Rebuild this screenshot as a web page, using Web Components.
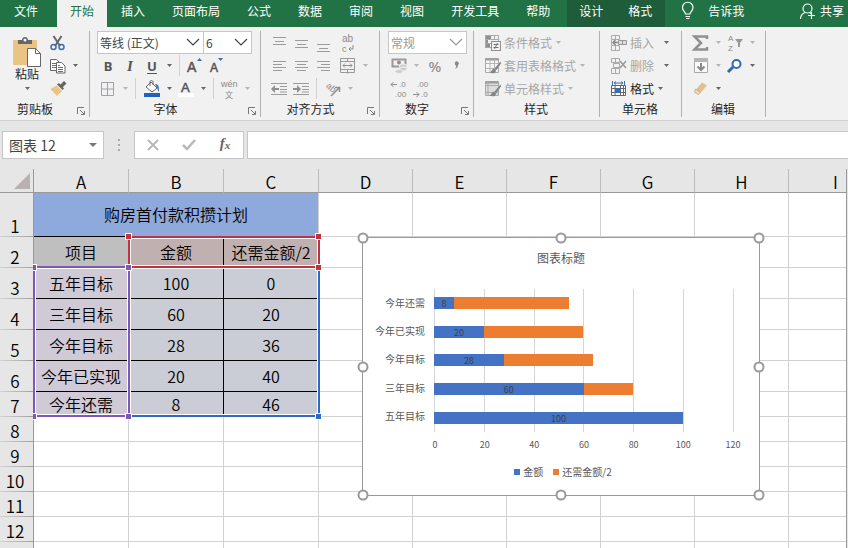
<!DOCTYPE html>
<html lang="zh-CN">
<head>
<meta charset="utf-8">
<title>购房首付款积攒计划</title>
<style>
html, body { margin: 0; height: 100%; overflow: hidden; }
body { font: 12px/16px "Noto Sans CJK SC", "Noto Sans", sans-serif; color: #262626; }
</style>
</head>
<body>
<excel-app></excel-app>
<script>
const svg = (w, h, body) => `<svg width="${w}" height="${h}" viewBox="0 0 ${w} ${h}" fill="none" stroke-width="1" aria-hidden="true">${body}</svg>`;
const T = (x, y, size, text, extra = '') => `<text x="${x}" y="${y}" font-size="${size}" stroke="none" fill="#8a8a8a" ${extra}>${text}</text>`;
const lines = (x1s, x2s, ys) => svg(16, 20, ys.map((y, i) => `<path stroke="#9c9c9c" d="M${x1s[i]} ${y}.5H${x2s[i]}"/>`).join(''));
const gridPart = '<path d="M.5 .5h13v14H.5z" fill="#f8f4f8" stroke="#aaa"/><path d="M.5 1.5h13" stroke="#999" stroke-width="2"/><path d="M.5 5.5h13M.5 10.5h13M5 1v14M9.500 1v14" stroke="#b5b5b5"/>';
const brushPart = '<path d="M15.500 3.500l-6 7 1.500 2 5-7z" fill="#858585"/><path d="M9 10.500c-2 0-2 3-4.500 4 3 1.500 6.500 1 6.500-2z" fill="#858585"/>';
const ICONS = {
  paste: svg(30, 31, '<rect x="1" y="4" width="24" height="25" rx="1" fill="#e9c485"/><path d="M6 8V4h4c0-4 6-4 6 0h4v4z" fill="#666"/><circle cx="13" cy="4" r="1.500" fill="#f1f1f1"/><path d="M15.500 12.500h8l5 5v13h-13z" fill="#fff" stroke="#666"/><path d="M23.500 12.500v5h5" stroke="#666"/>'),
  cut: svg(16, 16, '<path d="M3.500 1l6.500 10M11.500 1L5 11" stroke="#666" stroke-width="2"/><circle cx="3.500" cy="12" r="2.500" stroke="#3c6eb4" stroke-width="1.500"/><circle cx="11.500" cy="12" r="2.500" stroke="#3c6eb4" stroke-width="1.500"/>'),
  copy: svg(16, 16, '<path d="M.5 1.500h6l3 3v8h-9z" fill="#fff" stroke="#666"/><path d="M2 5.500h4M2 7.500h4M2 9.500h4" stroke="#3c78c8"/><path d="M6.500 4.500h5l3.500 3.500v7h-8.500z" fill="#fff" stroke="#666"/><path d="M8 9.500h5M8 11.500h5M8 7.500h2M8 13.500h5" stroke="#3c78c8"/>'),
  brush: svg(17, 15, '<path d="M10 4l4-4 2.500 2.500-4 4z" fill="#666"/><path d="M7 3.500l2-1.500 5 5.500-1.500 1.500z" fill="#666"/><path d="M6.500 4.500l5.500 5.500-5 5-6.500-7z" fill="#e9c485"/>'),
  grow: svg(18, 20, T(0, 16, 14, 'A', 'style="fill:#555;stroke:#555;stroke-width:.5"') + '<path d="M10 5l2.500-3L15 5z" fill="#3c6eb4"/>'),
  shrink: svg(18, 20, T(1, 16, 12, 'A', 'style="fill:#555;stroke:#555;stroke-width:.5"') + '<path d="M9 2h5l-2.500 3z" fill="#3c6eb4"/>'),
  border: svg(14, 14, '<path d="M.5 .5h12v13H.5zM6.500 .5v13M.5 7h12" stroke="#a5a0a8"/>'),
  fill: svg(18, 18, '<path d="M3 7l5-5 6 6-5 4z" fill="#fff" stroke="#666"/><path d="M7 6V2c0-2 3-2 3 0v3" stroke="#666"/><path d="M12 4c4 0 4 3 4 8-2-2-1-4-3-6z" fill="#3c6eb4"/><rect x="1" y="13" width="16" height="4" fill="#1f63be"/>'),
  color: svg(18, 18, '<rect x="1" y="13" width="16" height="4" fill="#fff"/>' + T(4, 12, 13, 'A', 'style="fill:#555;stroke:#555;stroke-width:.5"')),
  pinyin: svg(20, 22, T(1, 9, 9, 'wén') + T(5, 20, 8, '文', 'class="cjk"')),
  top: lines([2,4,2], [15,13,15], [4,8,11]), mid: lines([2,4,2], [15,13,15], [7,11,14]), bot: lines([2,4,2], [15,13,15], [11,15,18]),
  left: lines([2,2,2,2], [15,11,15,11], [5,8,11,14]), center: lines([2,4,2,4], [15,13,15,13], [5,8,11,14]), right: lines([2,6,2,6], [15,15,15,15], [5,8,11,14]),
  outdent: svg(16, 14, '<path d="M0 1.500h16M9 4.500h7M9 7.500h7M0 12.500h16M9 10h7" stroke="#9c9c9c"/><path d="M0 7l4-4v3h4v2H4v3z" fill="#8f8f8f"/>'),
  indent: svg(16, 14, '<path d="M0 1.500h16M9 4.500h7M9 7.500h7M0 12.500h16M9 10h7" stroke="#9c9c9c"/><path d="M8 7L4 3v3H0v2h4v3z" fill="#8f8f8f"/>'),
  wrap: svg(16, 22, T(2, 10, 10, 'ab') + T(2, 20, 9, 'c') + '<path d="M13 13v4H9M11 15l-2 2 2 2" stroke="#8f8f8f"/>'),
  merge: svg(16, 16, '<path d="M.5 .5h14v14H.5zM.5 3.500h14M.5 11.500h14M7.500 .5v3M7.500 11.500v4" stroke="#999"/><path d="M3 7.500h9M5 5.500l-2 2 2 2M10 5.500l2 2-2 2" stroke="#8f8f8f"/>'),
  orient: svg(18, 18, '<g transform="rotate(42 6 9)">' + T(1, 10, 9, 'ab') + '</g><path d="M7 16l8-8M11 7.500h4.500V12" stroke="#8f8f8f" stroke-width="1.500"/>'),
  money: svg(17, 17, '<path d="M1.500 2.500h13v7h-13z" stroke="#999" stroke-width="2"/><circle cx="8" cy="5.500" r="2" fill="#8f8f8f"/><g fill="#ccc" stroke="#f1f1f1"><ellipse cx="12" cy="9" rx="4" ry="2"/><ellipse cx="12" cy="12" rx="4" ry="2"/><ellipse cx="8" cy="14.500" rx="4" ry="2"/></g>'),
  comma: svg(8, 12, '<path d="M2 2.500a2 2 0 1 1 3 2.500c0 2-1 3-3 4 1-1.500 1.500-2.500 1-3.500-1-.5-1.500-1.500-1-3z" fill="#8a8a8a"/>'),
  incdec: svg(16, 20, T(8, 8, 8, '.0') + T(4, 18, 8, '.00') + '<path d="M0 5.500h6M2.500 3L0 5.500 2.500 8" stroke="#8f8f8f"/>'),
  decdec: svg(16, 20, T(4, 8, 8, '.00') + T(8, 18, 8, '.0') + '<path d="M0 15.500h6M3.500 13L6 15.500 3.500 18" stroke="#8f8f8f"/>'),
  cond: svg(16, 16, '<path d="M0 0h6v4H0zM0 5h3v3H0zM0 9h5v4H0z" fill="#8f8f8f"/><path d="M.5 .5h13v12H.5zM.5 4.500h13M.5 8.500h13M9.500 .5v4" stroke="#aaa"/><rect x="6.500" y="6.500" width="9" height="9" fill="#f1f1f1" stroke="#8f8f8f"/><path d="M8.500 9.500h5M8.500 12.500h5M12.500 8l-3 6" stroke="#777"/>'),
  tstyle: svg(17, 16, gridPart + brushPart),
  cstyle: svg(17, 16, '<path d="M.5 .5h13v14H.5z" fill="#ddd" stroke="#aaa"/><path d="M.5 1.500h13" stroke="#999" stroke-width="2"/><path d="M.5 4.500h13M.5 11.500h13M3 1v14" stroke="#aaa"/>' + brushPart),
  insert: svg(16, 16, '<path d="M.5 .5h8v4h-8zM4.500 .5v4M.5 10.500h8v5h-8zM4.500 10.500v5M.5 5v5" stroke="#aaa"/><path d="M7.500 5.500h8v4h-8zM11.500 5.500v4" fill="#ddd" stroke="#999"/><path d="M7 7.500H2M4.500 5L2 7.500 4.500 10" stroke="#888" stroke-width="1.500"/>'),
  remove: svg(16, 16, '<path d="M.5 .5h8v4h-8zM4.500 .5v4M.5 10.500h8v5h-8zM4.500 10.500v5M2.500 5.500h6v4h-6z" stroke="#aaa"/><path d="M9 3l6 7M15 3l-6 7" stroke="#999" stroke-width="1.500"/>'),
  format: svg(16, 16, '<path d="M1.500 0v4M13.500 0v4M3 2h9M5 .5L3 2l2 1.500M10 .5L12 2l-2 1.500" stroke="#3c6eb4"/><path d="M.5 4.500h14v10H.5zM.5 7.500h14M.5 11.500h14M4 4.500v10M9.500 4.500v10M12.500 4.500v10" fill="#fff" stroke="#666"/><path d="M4 7h5v5H4z" fill="#2f6dc8"/>'),
  sum: svg(16, 16, '<path d="M14 4V1.500H1.500L8 8l-6.500 6.500H14V12" stroke="#909090" stroke-width="2.500"/>'),
  down: svg(14, 15, '<path d="M.5 .5h13v14H.5z" fill="#fafafa" stroke="#aaa"/><path d="M0 2h14" stroke="#b5b5b5" stroke-width="4"/><path d="M7 5v7M3.500 8.500L7 12l3.500-3.500" stroke="#888" stroke-width="2"/>'),
  clear: svg(14, 13, '<path d="M8 .5L13 3.500 6 11.500 1.500 8z" fill="#e0c091"/><path d="M1.500 7L6 10.500 4.500 12.500.5 10z" fill="#f0dcc0" stroke="#d0b080"/>'),
  sort: svg(17, 20, T(1, 8, 8, 'A') + T(1, 18, 8, 'Z') + '<path d="M8 6h8l-3 4v4h-2v-4z" fill="#999"/>'),
  find: svg(16, 14, '<circle cx="9.500" cy="5" r="4" fill="#fff" stroke="#3068b8" stroke-width="2"/><path d="M6 8l-5 5" stroke="#3068b8" stroke-width="3"/>'),
  chevron: svg(14, 9, '<path d="M1 1l6 6 6-6" stroke="currentColor" stroke-width="1.200"/>'),
  arrow: svg(5, 3, '<path d="M0 0h5L2.500 3z" fill="currentColor"/>'),
  launch: svg(8, 8, '<path d="M.5 7V.5H7M4 7.500h3.500V4M3 3l4 4" stroke="currentColor"/>'),
  bulb: svg(14, 18, '<path d="M4.500 12c0-2-3-3-3-6.500a5 5 0 0 1 10.500 0c0 3.500-3 4.500-3 6.500zM4.500 14.500h4.500M5 16.500h3.500" stroke="#fff" stroke-width="1.200"/>'),
  person: svg(16, 17, '<circle cx="7.500" cy="5.500" r="4.500" stroke="#fff" stroke-width="1.200"/><path d="M.5 16c0-4 2-5.500 4.500-6.500M9.500 9.500l1.500 1M8 12.500h7M11.500 9v7" stroke="#fff" stroke-width="1.200"/>'),
  cross: svg(12, 12, '<path d="M1 1l10 10M11 1L1 11" stroke="#b8b8b8" stroke-width="2"/>'),
  check: svg(14, 12, '<path d="M1 6l4 4 8-9" stroke="#b8b8b8" stroke-width="2.500"/>'),
};
const RESET = `*{box-sizing:border-box} button,input,select{font:inherit;color:inherit;border:0;background:none;padding:0;margin:0;border-radius:0;outline:0} svg{display:block;flex:none;overflow:visible} svg text{font-family:"Liberation Sans",sans-serif;font-weight:400} svg text.cjk{font-family:"Noto Sans CJK SC",sans-serif}`;
class Part extends HTMLElement {
  connectedCallback() {
    if (this.shadowRoot) return;
    this.attachShadow({ mode: 'open' }).innerHTML = `<style>${RESET}${this.css()}</style>${this.html()}`;
  }
  attr(name) { return this.getAttribute(name) || ''; }
}

customElements.define('app-tabs', class extends Part {
  css() { return `:host{display:flex;background:#217346;color:#fff;height:27px;overflow:hidden}
    nav{display:flex;gap:1px} button{height:27px;padding:0 13px 5px;white-space:nowrap}
    .file{padding-left:14px;padding-right:18px} .on{background:#f1f1f1;color:#217346}
    .ctx{display:flex;background:#1e5c3a;margin-left:3px} .ctx button{padding-left:12px}
    .tell,.share{display:flex;align-items:center;gap:13px} .tell{padding-left:16px}
    .share{gap:4px;margin-left:auto;padding-right:4px}`; }
  html() { const b = (t, c = '') => `<button class="${c}">${t}</button>`;
    return `<nav>${b('文件', 'file')}${b('开始', 'on')}${['插入','页面布局','公式','数据','审阅','视图','开发工具','帮助'].map(t => b(t)).join('')}
    <span class="ctx">${b('设计')}${b('格式')}</span></nav>
    <button class="tell">${ICONS.bulb}告诉我</button><button class="share">${ICONS.person}共享</button>`; }
});

customElements.define('ribbon-group', class extends Part {
  css() { return `:host{display:flex;flex-direction:column;flex:none;padding:0 1px 0 7px;border-right:1px solid #b1b1b1;height:86px;color:#262626}
    .body{height:69px} footer{display:flex;align-items:center;margin-left:-7px;height:20px}
    footer span{flex:1;text-align:center} button{width:18px;height:16px;display:flex;align-items:center;justify-content:flex-start;padding:5px 0 0 7px;color:#777}`; }
  html() { return `<div class="body"><slot></slot></div><footer><span>${this.attr('name')}</span>${this.hasAttribute('launcher') ? `<button aria-label="${this.attr('name')}设置">${ICONS.launch}</button>` : ''}</footer>`; }
});

customElements.define('ribbon-row', class extends Part {
  css() { return `:host{display:flex;align-items:center;height:23px}`; }
  html() { return '<slot></slot>'; }
});

customElements.define('ribbon-sep', class extends Part {
  css() { return `:host{display:block;width:1px;height:21px;background:#d0d0d0;margin:0 5px 0 4px}`; }
  html() { return ''; }
});

customElements.define('ribbon-button', class extends Part {
  css() { return `:host{display:flex;flex:none;color:#262626} :host([off]){color:#a6a6a6}
    button{display:flex;align-items:center;justify-content:center;height:23px;white-space:nowrap}
    .icon{width:22px;display:flex;justify-content:center} .glyph{font:700 13px/20px "Noto Sans","Noto Sans CJK SC",sans-serif;color:#555}
    :host([off]) .glyph{color:#8f8f8f;font-weight:500;font-size:15px}
    .wide .icon{width:16px;margin-right:3px}
    .arrow{width:12px;display:flex;justify-content:center;color:#666} :host([off]:not([live])) .arrow{color:#b5b5b5}
    :host([live]) .arrow{margin-left:6px}
    .tall{flex-direction:column;width:40px;height:69px;justify-content:flex-start;padding-top:5px;line-height:14px} .tall .icon{width:30px;line-height:16px} .tall .arrow{padding-top:6px}
    i{font:italic 700 15px/20px "Liberation Serif",serif} u{text-underline-offset:2px}`; }
  html() {
    const label = this.attr('label'), glyph = this.attr('glyph'), tag = this.attr('tag') || 'span';
    return `<button class="${this.hasAttribute('tall') ? 'tall' : label ? 'wide' : ''}" aria-label="${this.attr('tip') || label}">
      <span class="icon glyph">${glyph ? `<${tag}>${glyph}</${tag}>` : ICONS[this.attr('icon')]}</span>${label}${this.hasAttribute('menu') ? `<span class="arrow">${ICONS.arrow}</span>` : ''}</button>`; }
});

customElements.define('ribbon-select', class extends Part {
  css() { return `:host{display:block;flex:none;color:#444} label{display:grid;align-items:center;height:23px;border:1px solid #c6c6c6;background:#fff}
    select,svg{grid-area:1/1} select{appearance:none;width:100%;height:21px;padding-left:2px} svg{justify-self:end;margin-right:3px;pointer-events:none}`; }
  html() { return `<label><select aria-label="${this.attr('tip')}"><option>${this.attr('value')}</option></select>${ICONS.chevron}</label>`; }
});

customElements.define('app-ribbon', class extends Part {
  css() { return `:host{display:flex;background:#f1f1f1;border-bottom:1px solid #d0d0d0;height:94px;padding:4px 0 3px;overflow:hidden}
    .clip{width:90px}.font{width:171px}.align{width:119px}.num{width:94px}.style{width:126px}.cells{width:82px}.edit{width:84px}
    .flex{display:flex} .family{width:107px}.size{width:49px;margin-left:-1px}.fmt{width:79px}
    .num .fmt{color:#999}
    .gap{margin-left:3px}.in{padding-left:4px}.one{padding-left:1px} .push{margin-left:2px}`; }
  html() {
    const b = (icon, tip, x = '') => `<ribbon-button icon="${icon}" tip="${tip}" ${x}></ribbon-button>`;
    const g = (glyph, tip, x = '') => `<ribbon-button glyph="${glyph}" tip="${tip}" ${x}></ribbon-button>`;
    const l = (icon, label, x) => `<ribbon-row><ribbon-button icon="${icon}" label="${label}" menu ${x}></ribbon-button></ribbon-row>`;
    const s = '<ribbon-sep></ribbon-sep>', r = (...a) => `<ribbon-row>${a.join('')}</ribbon-row>`;
    return `
    <ribbon-group class="clip" name="剪贴板" launcher><div class="flex"><ribbon-button tall icon="paste" label="粘贴" menu></ribbon-button><div>${r(b('cut','剪切'))}${r(b('copy','复制','menu'))}${r(b('brush','格式刷'))}</div></div></ribbon-group>
    <ribbon-group class="font" name="字体" launcher><div>${r('<ribbon-select class="family" tip="字体" value="等线 (正文)"></ribbon-select>','<ribbon-select class="size" tip="字号" value="6"></ribbon-select>')}
      ${r(g('B','加粗'), g('I','倾斜','tag="i"'), g('U','下划线','tag="u" menu'), s, b('grow','增大字号'), b('shrink','减小字号'))}
      ${r(b('border','边框','menu off'), s, b('fill','填充颜色','menu'), b('color','字体颜色','menu'), s, b('pinyin','拼音','menu off'))}</div></ribbon-group>
    <ribbon-group class="align" name="对齐方式" launcher><div>${r(b('top','顶端对齐','off'), b('mid','垂直居中','off'), b('bot','底端对齐','off'), b('wrap','自动换行','off class="gap"'))}
      ${r(b('left','左对齐','off'), b('center','居中','off'), b('right','右对齐','off'), b('merge','合并后居中','off menu class="gap"'))}
      ${r(b('outdent','减少缩进','off'), b('indent','增加缩进','off'), s, b('orient','方向','off menu'))}</div></ribbon-group>
    <ribbon-group class="num" name="数字" launcher><div class="one">${r('<ribbon-select class="fmt" tip="数字格式" value="常规"></ribbon-select>')}
      ${r(b('money','会计格式','off menu'), g('%','百分比','off class="push"'), b('comma','千位分隔','off'))}${r(b('incdec','增加小数位','off'), b('decdec','减少小数位','off'))}</div></ribbon-group>
    <ribbon-group class="style" name="样式"><div class="in">${l('cond','条件格式','off')}${l('tstyle','套用表格格式','off')}${l('cstyle','单元格样式','off')}</div></ribbon-group>
    <ribbon-group class="cells" name="单元格"><div class="in">${l('insert','插入','off live')}${l('remove','删除','off live')}${l('format','格式','')}</div></ribbon-group>
    <ribbon-group class="edit" name="编辑"><div class="one">${r(b('sum','求和','off menu'), b('sort','排序和筛选','off menu'))}${r(b('down','填充','off menu'), b('find','查找','menu'))}${r(b('clear','清除','menu'))}</div></ribbon-group>`; }
});

customElements.define('formula-bar', class extends Part {
  css() { return `:host{display:flex;background:#e6e6e6;height:48px;padding:10px 0 10px 2px;color:#444}
    .box{display:flex;align-items:center;height:28px;border:1px solid #c6c6c6;background:#fff}
    .name{width:102px;padding-right:6px} .name input{flex:1;min-width:0;padding-left:6px;font-size:14px} .name svg{width:8px;height:4px;color:#777}
    .dots{width:30px;display:flex;flex-direction:column;align-items:center;justify-content:center;gap:3px} .dots b{width:2px;height:2px;background:#aaa}
    .ops{width:110px;justify-content:space-around} .ops button{width:28px;display:flex;justify-content:center;font:italic 700 15px/20px "Liberation Serif",serif;color:#666} small{font-size:11px;line-height:24px}
    .text{flex:1;margin-left:3px;border-right:0} .text input{width:100%;height:26px;padding:0 6px}`; }
  html() { return `<div class="box name"><input aria-label="名称框" value="图表 12"><button aria-label="名称列表">${ICONS.arrow.replace('viewBox="0 0 5 3"', 'viewBox="0 0 5 3" preserveAspectRatio="none"')}</button></div>
    <div class="dots"><b></b><b></b><b></b></div>
    <div class="box ops"><button aria-label="取消">${ICONS.cross}</button><button aria-label="输入">${ICONS.check}</button><button aria-label="插入函数">f<small>x</small></button></div>
    <div class="box text"><input aria-label="编辑栏"></div>`; }
});

customElements.define('stacked-chart', class extends Part {
  css() { return `:host{display:flex;flex-direction:column;width:398px;height:259px;background:#fff;border:1px solid #999;color:#595959;font-size:10px;line-height:12px}
    h2{margin:12px 0 23px;font-size:12px;line-height:16px;font-weight:400;text-align:center}
    .plot{display:grid;grid-template-columns:71px 299px}
    .names{display:grid;grid-template-rows:repeat(5,1fr);align-items:center;text-align:right;padding-right:9px;padding-bottom:2px;height:143px;white-space:nowrap}
    .bars{display:grid;grid-template-rows:repeat(5,1fr);align-items:center;height:143px;grid-area:1/2}
    .ticks{grid-area:1/2;display:flex;justify-content:space-between;margin-right:-1px} .ticks i{width:1px;background:#d5d5d5}
    .bar{display:flex;height:12px} .a{background:#4472c4;color:#404040;text-align:center;font-size:9px;line-height:13px} .b{background:#ed7d31}
    .axis{display:flex;justify-content:space-between;margin:7px 11px 0 57px;font-size:9px} .axis span{width:30px;text-align:center}
    .legend{display:flex;justify-content:center;gap:10px;margin-top:15px;padding-left:4px} .legend span{display:flex;align-items:center;gap:3px} .legend b{width:6px;height:6px}
    .h{position:absolute;width:11px;height:11px;border:2px solid #999;border-radius:50%;background:#fff;transform:translate(-50%,-50%)}`; }
  html() {
    const data = [['今年还需',8,46],['今年已实现',20,40],['今年目标',28,36],['三年目标',60,20],['五年目标',100,0]];
    const pct = v => (v / 120 * 100) + '%';
    return `<h2>图表标题</h2><div class="plot"><div class="names">${data.map(d => `<span>${d[0]}</span>`).join('')}</div>
      <div class="ticks">${'<i></i>'.repeat(7)}</div>
      <div class="bars">${data.map(d => `<div class="bar"><div class="a" style="width:${pct(d[1])}">${d[1]}</div><div class="b" style="width:${pct(d[2])}"></div></div>`).join('')}</div></div>
      <div class="axis">${[0,20,40,60,80,100,120].map(v => `<span>${v}</span>`).join('')}</div>
      <div class="legend"><span><b class="a"></b>金额</span><span><b class="b"></b>还需金额/2</span></div>
      ${[0,50,100].map(y => [0,50,100].map(x => x === 50 && y === 50 ? '' : `<i class="h" style="left:${x}%;top:${y}%"></i>`).join('')).join('')}`; }
});

customElements.define('sheet-grid', class extends Part {
  css() { return `:host{display:block;flex:1;min-height:0;position:relative;overflow:hidden;background:#fff;border-right:1px solid #999;margin-right:1px;color:#000}
    table{border-collapse:separate;border-spacing:0;table-layout:fixed;width:0;font-weight:350}
    th{background:#e6e6e6;font-weight:350;font-size:17px;line-height:18px;padding:0}
    thead th{height:24px;border-bottom:1px solid #999;border-right:1px solid #bbb;vertical-align:bottom;padding-bottom:1px}
    tbody th{border-right:1px solid #999;vertical-align:bottom;padding:0 3px 2px 0;background:linear-gradient(90deg,#d2d2d2,#a0a0a0) bottom/100% 1px no-repeat #e6e6e6}
    td{border-right:1px solid #d2d2d2;border-bottom:1px solid #d2d2d2;padding:0 0 1px;text-align:center;vertical-align:middle;font-size:16px;line-height:20px;white-space:nowrap}
    .corner{vertical-align:bottom;border-right-color:#999;padding:0 3px 3px 0} .corner svg{margin-left:auto}
    .r1{background:#8ea9db;border-color:#000;border-right-color:#d2d2d2} .r2{background:#bfbfbf} .r2.v{background:#c0b0b0} .d{background:#d0cad6} .d.v{background:#cacdd6}
    .r2,.d{border-color:#000}
    .range{position:absolute;left:33px;top:0;overflow:hidden} stacked-chart{position:absolute;left:362px;top:68px}`; }
  html() {
    const rows = [['购房首付款积攒计划'],['项目','金额','还需金额/2'],['五年目标',100,0],['三年目标',60,20],['今年目标',28,36],['今年已实现',20,40],['今年还需',8,46]];
    const h = [44,31,31,31,31,31,25];
    const cols = Math.max(9, Math.min(26, Math.ceil((innerWidth - 319) / 94) + 3));
    const full = Math.max(12, Math.floor((innerHeight - 417) / 25) + 7);
    let body = '';
    for (let r = 0; r <= full; r++) {
      body += `<tr style="height:${h[r] || 25}px"><th scope="row">${r < full ? r + 1 : ''}</th>`;
      if (r === 0) body += `<td class="r1" colspan="3">${rows[0][0]}</td>`;
      for (let c = r === 0 ? 3 : 0; c < cols; c++) {
        const on = r < 7 && c < 3;
        body += `<td class="${on ? (r === 1 ? 'r2' : 'd') + (c ? ' v' : '') : ''}">${on ? rows[r][c] : ''}</td>`;
      }
      body += '</tr>';
    }
    const box = (x, y, w, hh, c) => `<rect x="${x + 1.5}" y="${y + 1.5}" width="${w - 3}" height="${hh - 3}" stroke="#fff"/><rect x="${x}" y="${y}" width="${w}" height="${hh}" stroke="${c}" stroke-width="2"/>`;
    const dot = (x, y, c) => `<rect x="${x - 3}" y="${y - 3}" width="6" height="6" fill="${c}" stroke="#fff"/>`;
    const P = '#7e57b8', R = '#c4313e', B = '#2f68c6';
    return `<table><colgroup><col style="width:34px">${Array.from({length: cols}, (_, i) => `<col style="width:${i < 3 ? 95 : 94}px">`).join('')}</colgroup>
      <thead><tr><th class="corner">${svg(16, 16, '<path d="M16 0v16H0z" fill="#b7b1b1"/>')}</th>${Array.from({length: cols}, (_, i) => `<th scope="col">${String.fromCharCode(65 + i)}</th>`).join('')}</tr></thead><tbody>${body}</tbody></table>
      <svg class="range" width="290" height="255" fill="none" aria-hidden="true">${box(96, 98, 190, 149, B)}${box(1, 98, 95, 149, P)}${box(96, 68, 190, 30, R)}
      ${dot(0.5, 98.5, P)}${dot(95.5, 98.5, P)}${dot(0.5, 247.5, P)}${dot(95.5, 247.5, P)}${dot(285.5, 247.5, B)}${dot(95.5, 67.5, R)}${dot(285.5, 67.5, R)}${dot(285.5, 98.5, R)}</svg>
      <stacked-chart></stacked-chart>`; }
});

customElements.define('excel-app', class extends Part {
  css() { return `:host{display:flex;flex-direction:column;height:100vh;background:#e6e6e6}`; }
  html() { return '<app-tabs></app-tabs><app-ribbon></app-ribbon><formula-bar></formula-bar><sheet-grid></sheet-grid>'; }
});
</script>
</body>
</html>
